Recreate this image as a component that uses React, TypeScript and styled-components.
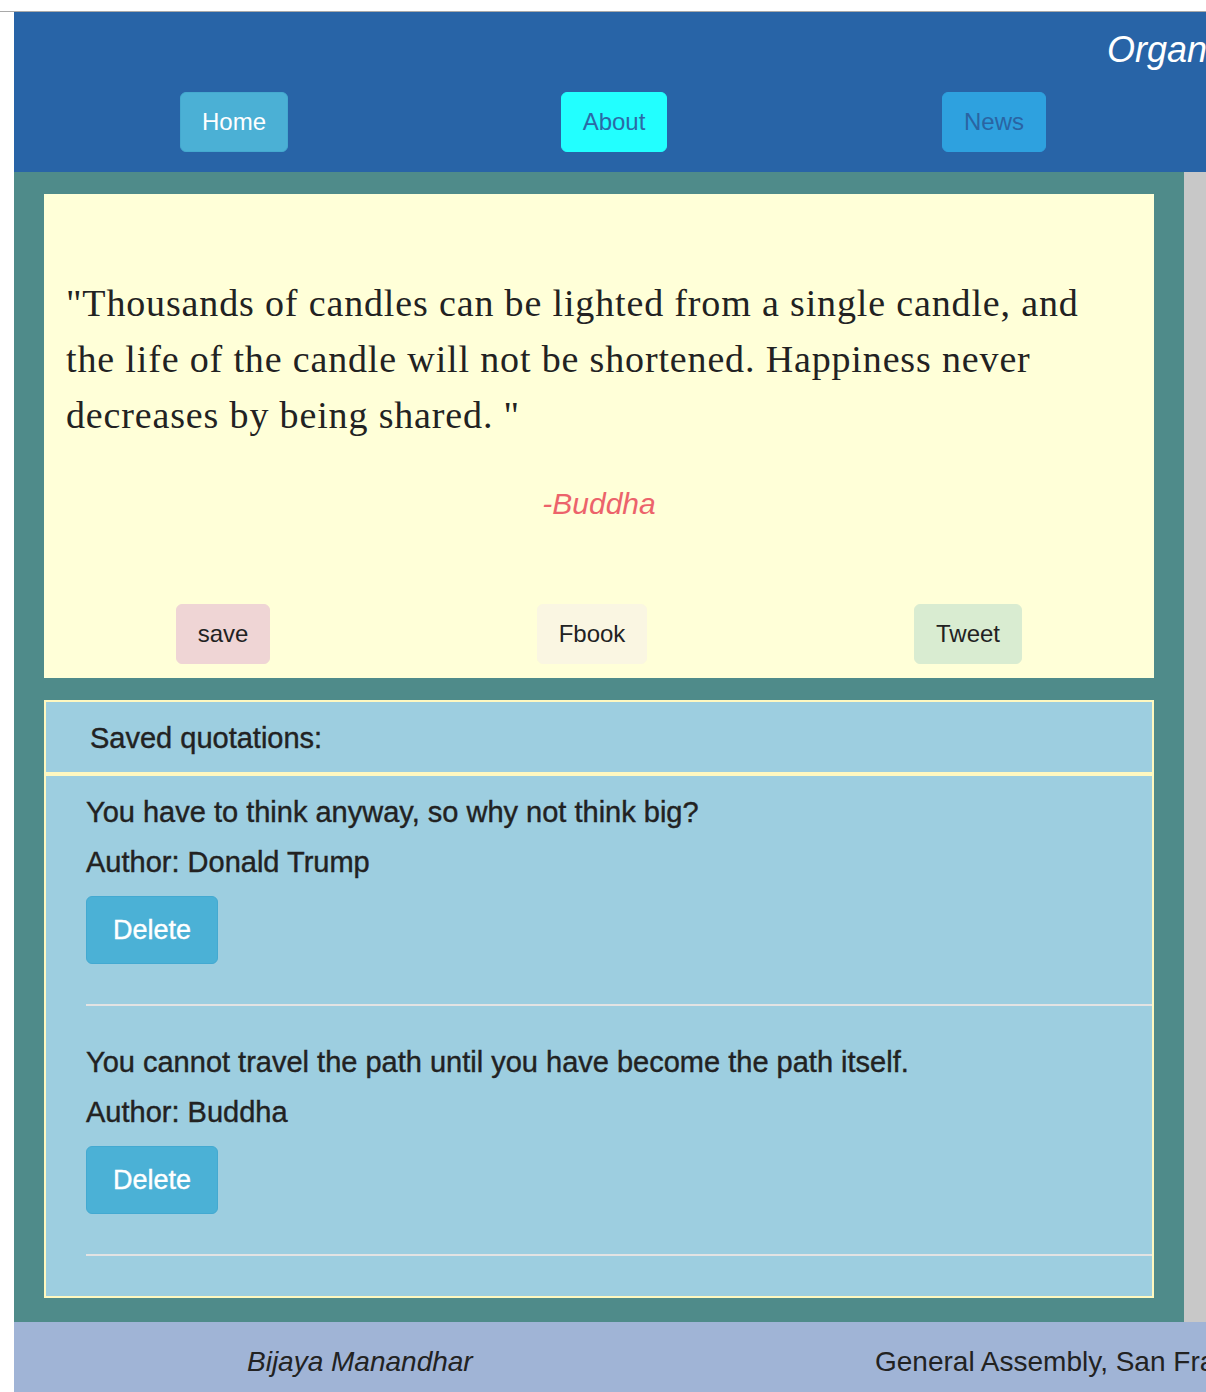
import styled, { createGlobalStyle } from "styled-components";

const GlobalStyle = createGlobalStyle`
    html, body {
        margin: 0;
        padding: 0;
        background: #ffffff;
        overflow: hidden;
    }
    * {
        box-sizing: border-box;
    }
`;

const TopRule = styled.div`
    height: 12px;
    border-bottom: 1px solid #a9a9a9;
`;

const Page = styled.div`
    margin-left: 14px;
    width: 1500px;
    font-family: "Liberation Sans", Arial, sans-serif;
    color: #222222;
`;

const Header = styled.header`
    background-color: #2864a7;
    padding: 18px 0 20px;
`;

const Title = styled.h1`
    margin: 0 0 22px;
    padding-left: 1093px;
    font-size: 36px;
    line-height: 40px;
    font-style: italic;
    font-weight: normal;
    color: #ffffff;
    white-space: nowrap;
`;

const Nav = styled.nav`
    display: grid;
    grid-template-columns: repeat(3, 380px);
    justify-items: center;
    padding-left: 30px;
`;

const NavButton = styled.button<{ $bg: string; $fg: string; $border: string }>`
    padding: 13px 21px;
    border: 1px solid ${(p) => p.$border};
    border-radius: 6px;
    background-color: ${(p) => p.$bg};
    color: ${(p) => p.$fg};
    font-family: "Liberation Sans", Arial, sans-serif;
    font-size: 24px;
    line-height: 32px;
`;

const Main = styled.main`
    background-color: #c8c8c8;
`;

const Container = styled.div`
    width: 1170px;
    padding: 22px 30px 24px;
    background-color: #4f8b8a;
`;

const QuoteCard = styled.section`
    background-color: #ffffd8;
    padding: 0 22px 14px;
`;

const QuoteText = styled.p`
    margin: 0;
    padding-top: 81px;
    font-family: "Liberation Serif", "Times New Roman", serif;
    font-size: 38px;
    letter-spacing: 0.85px;
    line-height: 56px;
    color: #222222;
`;

const QuoteAuthor = styled.p`
    margin: 43px 0 0;
    text-align: center;
    font-size: 30px;
    line-height: 36px;
    font-style: italic;
    color: #ec636b;
`;

const ShareRow = styled.div`
    display: grid;
    grid-template-columns: 358px 380px 372px;
    justify-items: center;
    margin: 82px -22px 0;
`;

const ShareButton = styled.button<{ $bg: string }>`
    padding: 13px 21px;
    border: 1px solid ${(p) => p.$bg};
    border-radius: 6px;
    background-color: ${(p) => p.$bg};
    color: #222222;
    font-family: "Liberation Sans", Arial, sans-serif;
    font-size: 24px;
    line-height: 32px;
`;

const SavedPanel = styled.section`
    margin-top: 22px;
    border: 2px solid #fff8c0;
    background-color: #9dcee0;
`;

const PanelHeading = styled.h4`
    margin: 0;
    padding: 18px 44px 16px;
    border-bottom: 4px solid #fff8c0;
    font-size: 29px;
    line-height: 36px;
    font-weight: normal;
    -webkit-text-stroke: 0.4px #222222;
`;

const PanelBody = styled.div`
    padding: 18px 0 2px 40px;
`;

const SavedItem = styled.article``;

const ItemLine = styled.p<{ $gap?: number }>`
    margin: ${(p) => p.$gap ?? 0}px 0 0;
    font-size: 29px;
    line-height: 36px;
    -webkit-text-stroke: 0.4px #222222;
`;

const DeleteButton = styled.button`
    margin-top: 16px;
    padding: 15px 26px;
    border: 1px solid #43a9d1;
    border-radius: 6px;
    background-color: #4bb1d6;
    color: #ffffff;
    font-family: "Liberation Sans", Arial, sans-serif;
    font-size: 27px;
    line-height: 36px;
    -webkit-text-stroke: 0.4px #ffffff;
`;

const Divider = styled.hr`
    margin: 40px 0 38px;
    border: 0;
    height: 2px;
    background-color: #e3e3e3;
`;

const Footer = styled.footer`
    display: grid;
    grid-template-columns: 628px auto;
    padding: 22px 0 22px 233px;
    background-color: #a0b4d6;
    font-size: 28px;
    line-height: 36px;
    white-space: nowrap;
`;

const Credit = styled.span<{ $italic?: boolean }>`
    font-style: ${(p) => (p.$italic ? "italic" : "normal")};
`;

const saved = [
    { text: "You have to think anyway, so why not think big?", author: "Donald Trump" },
    { text: "You cannot travel the path until you have become the path itself.", author: "Buddha" },
];

export default function App() {
    return (
        <>
            <GlobalStyle />
            <TopRule />
            <Page>
                <Header>
                    <Title>Organized Quotes</Title>
                    <Nav>
                        <NavButton $bg="#4bb0d5" $fg="#ffffff" $border="#45a9cf">
                            Home
                        </NavButton>
                        <NavButton $bg="#22ffff" $fg="#2b6aa6" $border="#22ffff">
                            About
                        </NavButton>
                        <NavButton $bg="#2ea1df" $fg="#2a64a3" $border="#2ea1df">
                            News
                        </NavButton>
                    </Nav>
                </Header>
                <Main>
                    <Container>
                        <QuoteCard>
                            <QuoteText>
                                "Thousands of candles can be lighted from a single candle, and the life of the
                                candle will not be shortened. Happiness never decreases by being shared. "
                            </QuoteText>
                            <QuoteAuthor>-Buddha</QuoteAuthor>
                            <ShareRow>
                                <ShareButton $bg="#efd5d5">save</ShareButton>
                                <ShareButton $bg="#faf6e2">Fbook</ShareButton>
                                <ShareButton $bg="#d9ecd1">Tweet</ShareButton>
                            </ShareRow>
                        </QuoteCard>
                        <SavedPanel>
                            <PanelHeading>Saved quotations:</PanelHeading>
                            <PanelBody>
                                {saved.map((q) => (
                                    <SavedItem key={q.text}>
                                        <ItemLine>{q.text}</ItemLine>
                                        <ItemLine $gap={14}>Author: {q.author}</ItemLine>
                                        <DeleteButton>Delete</DeleteButton>
                                        <Divider />
                                    </SavedItem>
                                ))}
                            </PanelBody>
                        </SavedPanel>
                    </Container>
                </Main>
                <Footer>
                    <Credit $italic>Bijaya Manandhar</Credit>
                    <Credit>General Assembly, San Francisco</Credit>
                </Footer>
            </Page>
        </>
    );
}
